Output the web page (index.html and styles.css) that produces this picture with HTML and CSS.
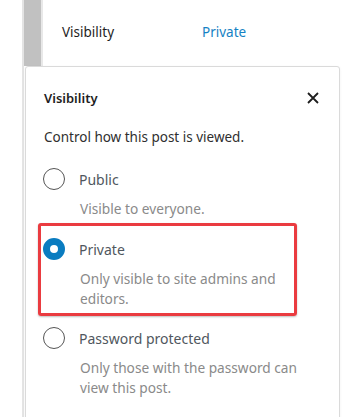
FILE: index.html
```html
<!DOCTYPE html>
<html>
<head>
<meta charset="utf-8">
<link rel="stylesheet" href="styles.css">
</head>
<body>
<div class="page">
  <div class="top">
    <div class="gutter"></div>
    <div class="bar"></div>
    <div class="bar-edge"></div>
    <div class="panel">
      <div class="panel-row">
        <span class="panel-label">Visibility</span>
        <span class="panel-value">Private</span>
      </div>
    </div>
  </div>
  <div class="popover">
    <div class="pop-head">
      <span class="pop-title">Visibility</span>
      <svg class="close" width="24" height="24" viewBox="0 0 24 24"><path d="M7 7 L17 17 M17 7 L7 17" stroke="#1e1e1e" stroke-width="1.8" fill="none"/></svg>
    </div>
    <p class="intro">Control how this post is viewed.</p>
    <div class="option">
      <div class="opt-row"><span class="radio"></span><span class="opt-label">Public</span></div>
      <p class="opt-desc">Visible to everyone.</p>
    </div>
    <div class="option">
      <div class="opt-row"><span class="radio checked"></span><span class="opt-label">Private</span></div>
      <p class="opt-desc">Only visible to site admins and editors.</p>
    </div>
    <div class="option last">
      <div class="opt-row"><span class="radio"></span><span class="opt-label">Password protected</span></div>
      <p class="opt-desc">Only those with the password can view this post.</p>
    </div>
    <div class="highlight"></div>
  </div>
</div>
</body>
</html>
```

FILE: styles.css
```css
html, body {
  margin: 0;
  padding: 0;
  background: #fff;
}
.page {
  width: 344px;
  height: 417px;
  overflow: hidden;
  font-family: "Noto Sans", "Open Sans", sans-serif;
  font-size: 13px;
  background: linear-gradient(to right, #fff 0, #fff 22px, #e4e4e4 22px, #e4e4e4 24px, #fff 24px);
}
.top {
  display: flex;
  height: 66px;
}
.gutter {
  width: 22px;
  flex: none;
  border-right: 2px solid #e4e4e4;
}
.bar {
  width: 17px;
  flex: none;
  background: #c1c1c1;
}
.bar-edge {
  width: 2px;
  flex: none;
  background: #e8e8e8;
}
.panel {
  flex: 1;
  background: #fff;
}
.panel-row {
  display: flex;
  align-items: center;
  height: 20px;
  margin-top: 22px;
  padding-left: 19px;
  font-size: 13.5px;
}
.panel-label {
  color: #1e1e1e;
  width: 140px;
}
.panel-value {
  color: #1582c4;
}
.popover {
  position: relative;
  margin-left: 25px;
  width: 315px;
  height: 400px;
  border: 1px solid #dadada;
  border-radius: 3px;
  background: #fff;
  box-shadow: 0 1px 3px rgba(0,0,0,0.06);
  padding: 21px 0 0 18px;
  box-sizing: border-box;
}
.pop-head {
  display: flex;
  align-items: center;
  height: 20px;
}
.pop-title {
  font-weight: 600;
  color: #1e1e1e;
  flex: 1;
}
.close {
  margin-right: 14px;
}
.intro {
  margin: 19px 0 0;
  line-height: 20px;
  color: #2f2f2f;
  font-size: 13.5px;
}
.option {
  margin-top: 20px;
}
.option + .option {
  margin-top: 18px;
}
.option.last {
  margin-top: 17px;
}
.opt-row {
  display: flex;
  align-items: center;
  height: 24px;
}
.radio {
  width: 22px;
  height: 22px;
  box-sizing: border-box;
  border: 1.5px solid #555;
  border-radius: 50%;
  margin-left: -1px;
  margin-right: 14px;
  flex: none;
}
.radio.checked {
  border: 7px solid #0a7cc0;
  background: #fff;
}
.opt-label {
  color: #50575e;
  font-size: 14px;
}
.opt-desc {
  margin: 8px 0 0 36px;
  width: 225px;
  line-height: 20px;
  color: #8a8a8a;
  font-size: 13.7px;
}
.highlight {
  position: absolute;
  left: 12px;
  top: 156px;
  width: 259px;
  height: 93px;
  box-sizing: border-box;
  border: 3px solid #ea3b40;
  border-radius: 3px;
  box-shadow: 0 1px 2px rgba(0,0,0,0.25);
}
```
